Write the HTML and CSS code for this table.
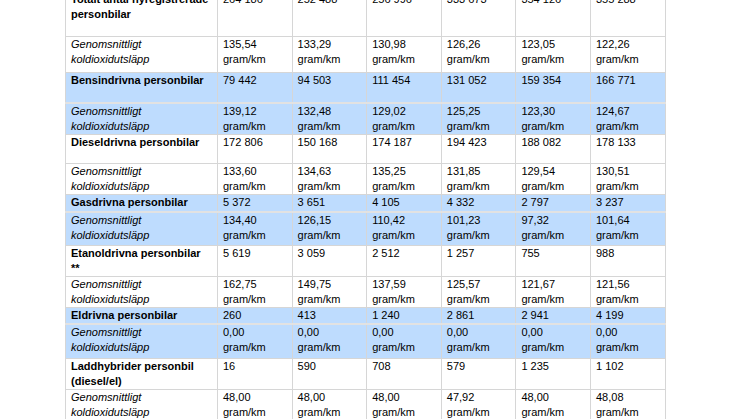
FILE: index.html
```html
<!DOCTYPE html>
<html lang="sv">
<head>
<meta charset="utf-8">
<title>Nyregistrerade personbilar</title>
<link rel="stylesheet" href="styles.css">
</head>
<body>
<div class="page">
<table class="stats">
  <colgroup>
    <col class="c-label">
    <col class="c-num"><col class="c-num"><col class="c-num">
    <col class="c-num"><col class="c-num"><col class="c-num">
  </colgroup>
  <tbody>
    <tr class="r-45">
      <th>Totalt antal nyregistrerade personbilar</th>
      <td>264 186</td><td>252 488</td><td>256 996</td><td>333 673</td><td>354 126</td><td>355 288</td>
    </tr>
    <tr class="avg r-36">
      <th>Genomsnittligt koldioxidutsläpp</th>
      <td>135,54 gram/km</td><td>133,29 gram/km</td><td>130,98 gram/km</td><td>126,26 gram/km</td><td>123,05 gram/km</td><td>122,26 gram/km</td>
    </tr>
    <tr class="hl r-30">
      <th>Bensindrivna personbilar</th>
      <td>79 442</td><td>94 503</td><td>111 454</td><td>131 052</td><td>159 354</td><td>166 771</td>
    </tr>
    <tr class="avg hl r-31">
      <th>Genomsnittligt koldioxidutsläpp</th>
      <td>139,12 gram/km</td><td>132,48 gram/km</td><td>129,02 gram/km</td><td>125,25 gram/km</td><td>123,30 gram/km</td><td>124,67 gram/km</td>
    </tr>
    <tr class="r-29">
      <th>Dieseldrivna personbilar</th>
      <td>172 806</td><td>150 168</td><td>174 187</td><td>194 423</td><td>188 082</td><td>178 133</td>
    </tr>
    <tr class="avg r-31">
      <th>Genomsnittligt koldioxidutsläpp</th>
      <td>133,60 gram/km</td><td>134,63 gram/km</td><td>135,25 gram/km</td><td>131,85 gram/km</td><td>129,54 gram/km</td><td>130,51 gram/km</td>
    </tr>
    <tr class="hl r-18">
      <th>Gasdrivna personbilar</th>
      <td>5 372</td><td>3 651</td><td>4 105</td><td>4 332</td><td>2 797</td><td>3 237</td>
    </tr>
    <tr class="avg hl r-33">
      <th>Genomsnittligt koldioxidutsläpp</th>
      <td>134,40 gram/km</td><td>126,15 gram/km</td><td>110,42 gram/km</td><td>101,23 gram/km</td><td>97,32 gram/km</td><td>101,64 gram/km</td>
    </tr>
    <tr class="r-31">
      <th>Etanoldrivna personbilar **</th>
      <td>5 619</td><td>3 059</td><td>2 512</td><td>1 257</td><td>755</td><td>988</td>
    </tr>
    <tr class="avg r-31">
      <th>Genomsnittligt koldioxidutsläpp</th>
      <td>162,75 gram/km</td><td>149,75 gram/km</td><td>137,59 gram/km</td><td>125,57 gram/km</td><td>121,67 gram/km</td><td>121,56 gram/km</td>
    </tr>
    <tr class="hl r-16">
      <th>Eldrivna personbilar</th>
      <td>260</td><td>413</td><td>1 240</td><td>2 861</td><td>2 941</td><td>4 199</td>
    </tr>
    <tr class="avg hl r-35">
      <th>Genomsnittligt koldioxidutsläpp</th>
      <td>0,00 gram/km</td><td>0,00 gram/km</td><td>0,00 gram/km</td><td>0,00 gram/km</td><td>0,00 gram/km</td><td>0,00 gram/km</td>
    </tr>
    <tr class="r-31">
      <th>Laddhybrider personbil (diesel/el)</th>
      <td>16</td><td>590</td><td>708</td><td>579</td><td>1 235</td><td>1 102</td>
    </tr>
    <tr class="avg r-33">
      <th>Genomsnittligt koldioxidutsläpp</th>
      <td>48,00 gram/km</td><td>48,00 gram/km</td><td>48,00 gram/km</td><td>47,92 gram/km</td><td>48,00 gram/km</td><td>48,08 gram/km</td>
    </tr>
  </tbody>
</table>
</div>
</body>
</html>
```

FILE: styles.css
```css
html, body {
  margin: 0;
  padding: 0;
  background: #ffffff;
}

.page {
  padding-left: 65px;
  overflow: hidden;
  height: 419px;
}

.stats {
  margin-top: -9px;
  width: 600px;
  table-layout: fixed;
  border-collapse: collapse;
  font-family: "Liberation Sans", Arial, sans-serif;
  font-size: 11px;
  line-height: 15px;
  color: #000000;
}

.c-label { width: 152px; }
.c-num { width: 74.6px; }

.stats th,
.stats td {
  border: 1px solid #d6d6d6;
  padding: 0 5px;
  vertical-align: top;
  text-align: left;
}

.stats th {
  font-weight: bold;
}

.stats td {
  font-weight: normal;
}

.avg th {
  font-weight: normal;
  font-style: italic;
}

.hl th,
.hl td {
  background: #bedcfe;
}

.hl + .hl th,
.hl + .hl td {
  border-top: 2px solid #e2e2e2;
}

.r-45 { height: 45px; }
.r-36 { height: 36px; }
.r-35 { height: 35px; }
.r-33 { height: 33px; }
.r-31 { height: 31px; }
.r-30 { height: 30px; }
.r-29 { height: 29px; }
.r-18 { height: 18px; }
.r-16 { height: 16px; }
```
